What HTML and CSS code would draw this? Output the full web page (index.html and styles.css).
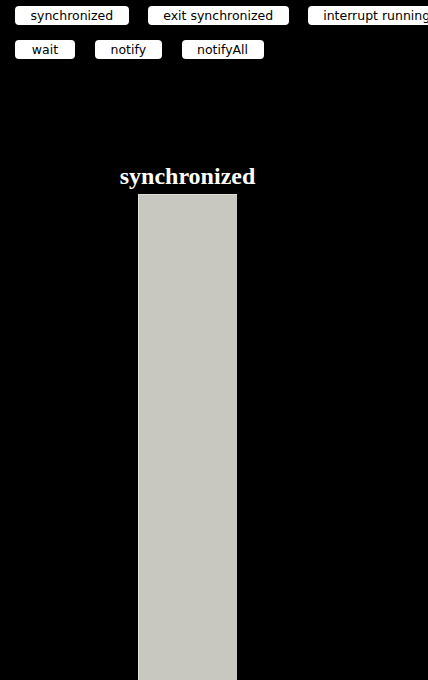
FILE: index.html
```html
<!DOCTYPE html>
<html>
<head>
<meta charset="utf-8">
<link rel="stylesheet" href="styles.css">
</head>
<body>
<div class="toolbar">
  <div class="row">
    <button class="btn">synchronized</button>
    <button class="btn">exit synchronized</button>
    <button class="btn">interrupt running</button>
  </div>
  <div class="row row-second">
    <button class="btn btn-short">wait</button>
    <button class="btn">notify</button>
    <button class="btn">notifyAll</button>
  </div>
</div>
<div class="stage">
  <div class="monitor">
    <div class="title">synchronized</div>
    <div class="column"></div>
  </div>
</div>
</body>
</html>
```
FILE: styles.css
```css
html, body {
  margin: 0;
  padding: 0;
  background: #000;
  overflow: hidden;
  height: 100%;
}
body {
  font-family: "DejaVu Sans", Verdana, sans-serif;
}
.toolbar {
  padding: 6px 0 0 15px;
  display: flex;
  flex-direction: column;
  gap: 15px;
}
.row {
  display: flex;
  gap: 19px;
  white-space: nowrap;
}
.row-second {
  gap: 20px;
}
.btn {
  flex: none;
  height: 19px;
  line-height: 19px;
  padding: 0 15.5px;
  margin: 0;
  border: none;
  border-radius: 4px;
  background: #fff;
  color: #000;
  font-family: "DejaVu Sans", Verdana, sans-serif;
  font-size: 12.5px;
}
.btn-short {
  min-width: 60px;
}
.stage {
  margin-top: 103px;
}
.monitor {
  margin-left: 88px;
  width: 199px;
  display: flex;
  flex-direction: column;
  align-items: center;
}
.title {
  font-family: "Liberation Serif", "Times New Roman", serif;
  font-weight: bold;
  font-size: 24px;
  line-height: 28px;
  color: #fff;
  white-space: nowrap;
}
.column {
  margin-top: 4px;
  width: 98px;
  height: 500px;
  background: #c8c8c0;
  border-left: 1px solid #e2e2dc;
  border-top: 1px solid #dcdcd6;
}
```
